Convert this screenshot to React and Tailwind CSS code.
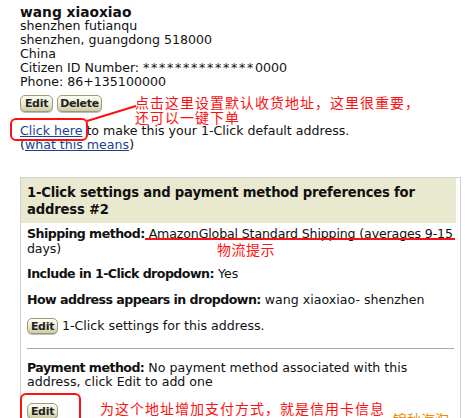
import React from 'react'

const Btn = ({ children, className = '' }) => (
  <span
    className={`inline-flex items-center justify-center rounded-[5px] border border-[#9c9a78] bg-gradient-to-b from-[#fdfdf3] via-[#ecebd3] to-[#cfcca6] text-[11px] font-bold leading-none tracking-[-0.3px] text-[#222] shadow-[0_1px_0_#bbb] ${className}`}
  >
    {children}
  </span>
)

const Label = ({ children }) => <span className="font-bold tracking-[-0.55px]">{children}</span>

export default function App() {
  return (
    <div className="relative h-[418px] w-[465px] overflow-hidden bg-white font-['DejaVu_Sans',Verdana,sans-serif] text-[12.6px] leading-[14px] text-[#111]">
      <div className="pl-[20px] pt-[5px]">
        <div className="text-[13.8px] font-bold">wang xiaoxiao</div>
        <div>shenzhen futianqu</div>
        <div>shenzhen, guangdong 518000</div>
        <div>China</div>
        <div>
          Citizen ID Number: <span className="tracking-[1.7px]">**************</span>0000
        </div>
        <div>Phone: 86+135100000</div>

        <div className="mt-[6px] flex gap-[4px]">
          <Btn className="h-[17px] w-[33px]">Edit</Btn>
          <Btn className="h-[17px] w-[45px]">Delete</Btn>
        </div>

        <div className="mt-[12px]">
          <a className="text-[#1d3f8f] underline">Click here</a> to make this your 1-Click default address.
        </div>
        <div>
          (<a className="text-[#1d3f8f] underline">what this means</a>)
        </div>
      </div>

      <div className="ml-[20px] mr-[4px] mt-[25px] border-l border-r border-t border-[#cfcfcf]">
        <div className="mr-[4px] bg-[#e9e9cf] px-[6px] pb-[5px] pt-[6px] text-[13.2px] font-bold leading-[17px] tracking-[-0.2px]">
          1-Click settings and payment method preferences for address #2
        </div>
        <div className="pl-[6px] pr-[2px] pt-[3px]">
          <div className="leading-[15px]">
            <Label>Shipping method:</Label>{' '}
            <span className="tracking-[-0.15px]">
              AmazonGlobal Standard Shipping (averages <span className="whitespace-nowrap">9-15</span> days)
            </span>
          </div>
          <div className="mt-[11px]">
            <Label>Include in 1-Click dropdown:</Label> Yes
          </div>
          <div className="mt-[12px]">
            <Label>How address appears in dropdown:</Label> wang xiaoxiao- shenzhen
          </div>
          <div className="mt-[11px] flex items-center gap-[4px]">
            <Btn className="h-[16px] w-[31px]">Edit</Btn>
            <span>1-Click settings for this address.</span>
          </div>
          <div className="mr-[4px] mt-[14px] border-t border-[#a8a8a8]" />
          <div className="mt-[12px] pr-[10px]">
            <Label>Payment method:</Label> No payment method associated with this address, click Edit to add one
          </div>
          <div className="mt-[14px]">
            <Btn className="h-[16px] w-[31px]">Edit</Btn>
          </div>
        </div>
      </div>

      {/* annotations */}
      <div className="absolute left-[10px] top-[118px] h-[23px] w-[78px] rounded-[6px] border-2 border-[#ff1010]" />
      <svg className="absolute left-0 top-0" width="465" height="418">
        <line x1="87" y1="121" x2="136" y2="106" stroke="#ff1010" strokeWidth="2" />
        <line x1="145" y1="239" x2="455" y2="239" stroke="#ff1010" strokeWidth="2" />
      </svg>
      <div className="absolute left-[135px] top-[95px] font-['Noto_Sans_CJK_SC',sans-serif] text-[14px] leading-[15px] tracking-[1px] text-[#ff1010]">
        <div>点击这里设置默认收货地址，这里很重要，</div>
        <div>还可以一键下单</div>
      </div>
      <div className="absolute left-[217px] top-[242px] font-['Noto_Sans_CJK_SC',sans-serif] text-[14px] leading-[15px] tracking-[0.5px] text-[#ff1010]">
        物流提示
      </div>
      <div className="absolute left-[20px] top-[393px] h-[40px] w-[61px] rounded-[6px] border-2 border-[#ff1010]" />
      <div className="absolute left-[100px] top-[400px] font-['Noto_Sans_CJK_SC',sans-serif] text-[14px] leading-[16px] tracking-[1px] text-[#ff1010]">
        为这个地址增加支付方式，就是信用卡信息
      </div>
      <div className="absolute left-[393px] top-[411px] font-['Noto_Sans_CJK_SC',sans-serif] text-[14px] leading-[16px] text-[#f08a00]">
        锦秋海淘
      </div>
    </div>
  )
}
